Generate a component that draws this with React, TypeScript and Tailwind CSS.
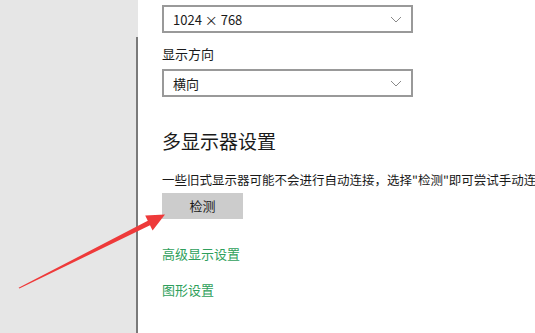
// App.tsx — Windows display settings panel with red pointer arrow
const FONT = '"Noto Sans CJK SC", "Noto Sans", sans-serif';

function Dropdown({ value }: { value: string }) {
  return (
    <div className="flex items-center justify-between w-[251px] h-[28px] border-2 border-[#999999] bg-white pl-[9px] pr-[9px]">
      <span className="text-[13px] text-[#1a1a1a] leading-none">{value}</span>
      <svg width="12" height="7" viewBox="0 0 12 7" fill="none">
        <path d="M1 1 L6 6 L11 1" stroke="#8a8a8a" strokeWidth="1" />
      </svg>
    </div>
  );
}

export default function App() {
  return (
    <div className="relative flex w-[535px] h-[333px] overflow-hidden bg-white" style={{ fontFamily: FONT }}>
      {/* ── Sidebar ─────────────────────────────── */}
      <div className="flex flex-col w-[138px] shrink-0 bg-[#e6e6e6]">
        <div className="h-[37px]" />
        <div className="flex-1 border-r-2 border-[#7a7a7a]" />
      </div>

      {/* ── Content ─────────────────────────────── */}
      <div className="flex flex-col min-w-0 pl-[24px] pt-[5px] whitespace-nowrap">
        <Dropdown value="1024 × 768" />
        <div className="mt-[12px] h-[18px] text-[13px] leading-[18px] text-[#1a1a1a]">显示方向</div>
        <div className="mt-[6px]">
          <Dropdown value="横向" />
        </div>

        <div className="mt-[31px] text-[19px] leading-[26px] text-[#1a1a1a]">多显示器设置</div>
        <div className="mt-[17px] text-[12.5px] leading-[18px] text-[#1a1a1a]">
          {'一些旧式显示器可能不会进行自动连接，选择"检测"即可尝试手动连接。'}
        </div>
        <button className="mt-[4px] w-[81px] h-[26px] bg-[#cccccc] text-[13px] text-[#1a1a1a]">检测</button>

        <div className="mt-[26px] text-[13px] leading-[18px] text-[#2f9f5c]">高级显示设置</div>
        <div className="mt-[18px] text-[13px] leading-[18px] text-[#2f9f5c]">图形设置</div>
      </div>

      {/* ── Annotation arrow ────────────────────── */}
      <svg className="absolute left-0 top-0" width="535" height="333" viewBox="0 0 535 333">
        <polygon
          points="18.6,287.8 147.8,220.8 145.2,215.5 165,214.5 152.6,230.5 150,225.2 19.4,288.6"
          fill="#ee3a3a"
        />
      </svg>
    </div>
  );
}
